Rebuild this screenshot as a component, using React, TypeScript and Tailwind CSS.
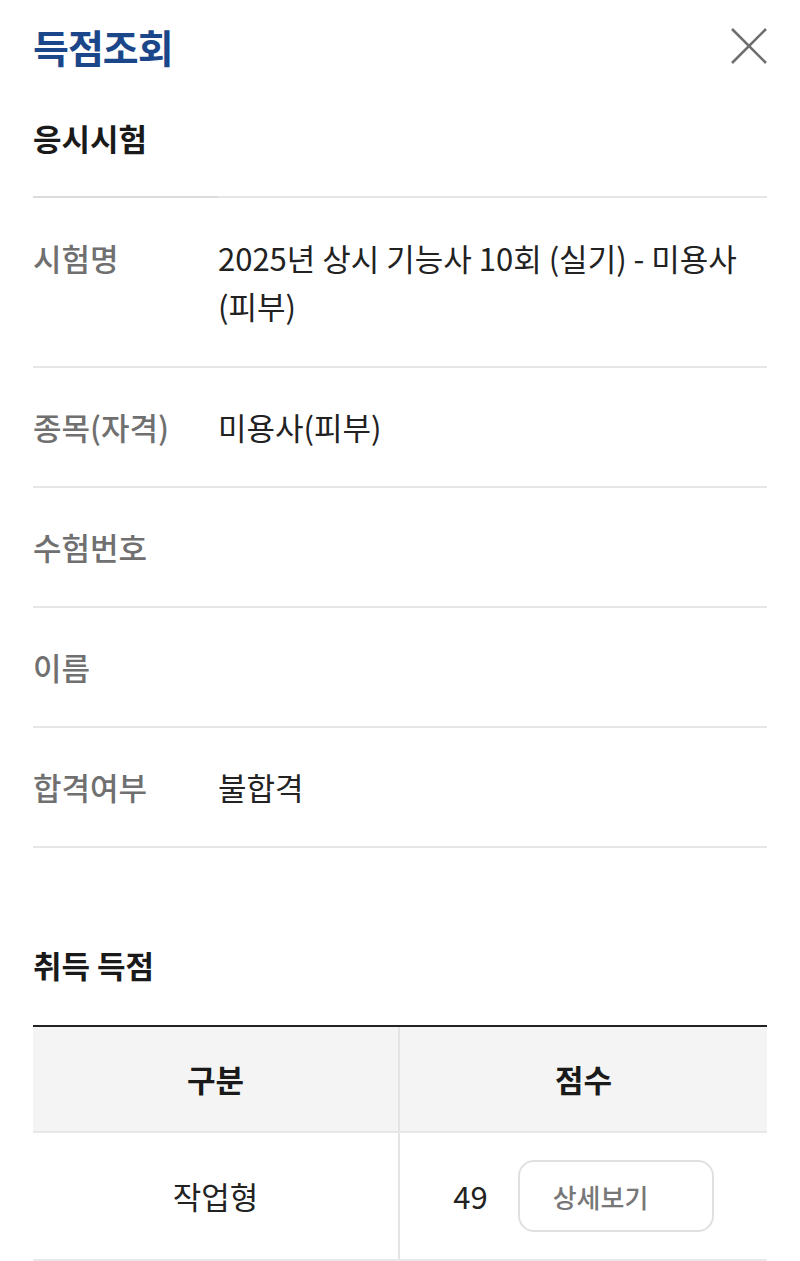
import React from "react";

const font = { fontFamily: '"Noto Sans CJK KR", "Noto Sans", sans-serif' };

function Row({ label, children, tall }: { label: string; children?: React.ReactNode; tall?: boolean }) {
  return (
    <div className={`flex border-b-2 border-[#e6e6e6] text-[31px] leading-[48px] ${tall ? "pt-[36px] pb-[36px]" : "py-[35px]"}`}>
      <div className="w-[185px] shrink-0 font-medium text-[#707070]">{label}</div>
      <div className="flex-1 text-[#222]">{children}</div>
    </div>
  );
}

export default function App() {
  return (
    <div className="min-h-[1261px] bg-white px-[33px]" style={font}>
      <div className="flex items-center justify-between pt-[22px]">
        <h1 className="text-[39px] font-bold leading-[48px] tracking-[-1px] text-[#1b478a]">득점조회</h1>
        <svg width="38" height="38" viewBox="0 0 38 38" className="mr-[-1px]">
          <path d="M2 2 L36 36 M36 2 L2 36" stroke="#6e6e6e" strokeWidth="2.6" fill="none" />
        </svg>
      </div>
      <h2 className="mt-[48px] text-[31px] font-bold leading-[40px] text-[#1a1a1a]">응시시험</h2>
      <div className="mt-[38px] flex">
        <div className="h-[2px] w-[185px] bg-[#dcdcdc]" />
        <div className="h-[2px] flex-1 bg-[#e6e6e6]" />
      </div>
      <Row label="시험명" tall>
        2025년 상시 기능사 10회 (실기) - 미용사
        <br />
        (피부)
      </Row>
      <Row label="종목(자격)">미용사(피부)</Row>
      <Row label="수험번호" />
      <Row label="이름" />
      <Row label="합격여부">불합격</Row>

      <h2 className="mt-[97px] text-[31px] font-bold leading-[40px] text-[#1a1a1a]">취득 득점</h2>
      <div className="mt-[40px] border-t-2 border-[#222]">
        <div className="grid grid-cols-[367px_1fr] bg-[#f4f4f4] border-b-2 border-[#e8e8e8]">
          <div className="flex h-[104px] items-center justify-center border-r-2 border-[#e4e4e4] text-[31px] font-bold text-[#1a1a1a]">구분</div>
          <div className="flex h-[104px] items-center justify-center text-[31px] font-bold text-[#1a1a1a]">점수</div>
        </div>
        <div className="grid grid-cols-[367px_1fr] border-b-2 border-[#e8e8e8]">
          <div className="flex h-[126px] items-center justify-center border-r-2 border-[#e4e4e4] text-[31px] text-[#222]">작업형</div>
          <div className="flex h-[126px] items-center justify-center gap-[30px]">
            <span className="text-[31px] text-[#222]">49</span>
            <button className="flex h-[72px] w-[196px] items-center justify-start rounded-[16px] border-2 border-[#e0e0e0] bg-white pl-[33px] text-[26px] font-medium text-[#777]">상세보기</button>
          </div>
        </div>
      </div>
    </div>
  );
}
